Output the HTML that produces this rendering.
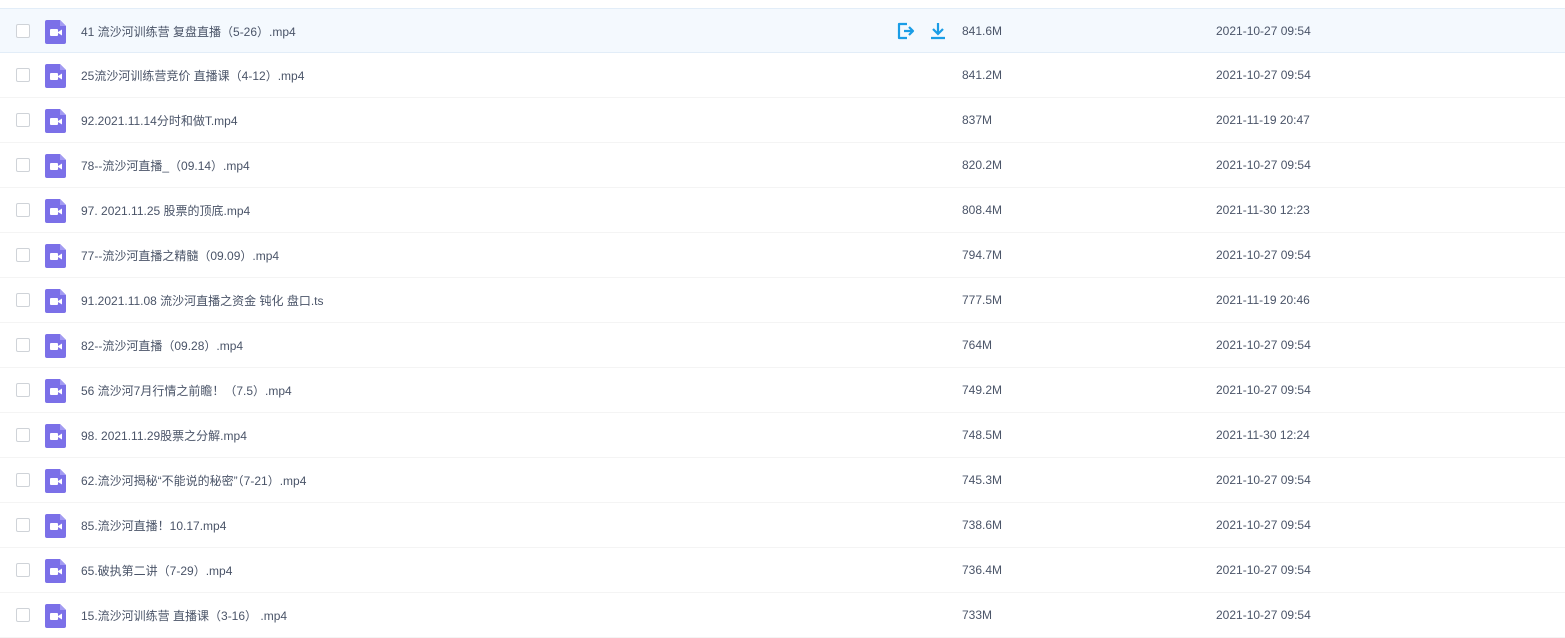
<!DOCTYPE html>
<html><head><meta charset="utf-8"><style>
body{margin:0;width:1565px;height:629px;overflow:hidden;background:#fff;font-family:"Liberation Sans","Noto Sans CJK SC",sans-serif;font-size:12px;color:#4a5468}
.r{position:absolute;left:0;width:1565px;height:44px;border-bottom:1px solid #f4f4f4}
.r.h{background:#f4f9fe;border-top:1px solid #e2edf8;border-bottom:1px solid #e2edf8;height:43px}
.cb{position:absolute;left:16px;top:15px;width:12px;height:12px;border:1px solid #cfd3d8;border-radius:2px;background:#fff}
.ic{position:absolute;left:45px;top:11px}
.n,.s,.d{position:absolute;top:14px;line-height:16px;white-space:nowrap}
.n{left:81px;top:15px}
.s{left:962px}
.d{left:1216px}
.a{position:absolute;left:896px;top:12px}
</style></head><body>
<div id="c"></div>
<script>
var rows=[["41 流沙河训练营 复盘直播（5-26）.mp4","841.6M","2021-10-27 09:54"],
["25流沙河训练营竞价 直播课（4-12）.mp4","841.2M","2021-10-27 09:54"],
["92.2021.11.14分时和做T.mp4","837M","2021-11-19 20:47"],
["78--流沙河直播_（09.14）.mp4","820.2M","2021-10-27 09:54"],
["97. 2021.11.25 股票的顶底.mp4","808.4M","2021-11-30 12:23"],
["77--流沙河直播之精髓（09.09）.mp4","794.7M","2021-10-27 09:54"],
["91.2021.11.08 流沙河直播之资金 钝化 盘口.ts","777.5M","2021-11-19 20:46"],
["82--流沙河直播（09.28）.mp4","764M","2021-10-27 09:54"],
["56 流沙河7月行情之前瞻！（7.5）.mp4","749.2M","2021-10-27 09:54"],
["98. 2021.11.29股票之分解.mp4","748.5M","2021-11-30 12:24"],
["62.流沙河揭秘“不能说的秘密”（7-21）.mp4","745.3M","2021-10-27 09:54"],
["85.流沙河直播！10.17.mp4","738.6M","2021-10-27 09:54"],
["65.破执第二讲（7-29）.mp4","736.4M","2021-10-27 09:54"],
["15.流沙河训练营 直播课（3-16） .mp4","733M","2021-10-27 09:54"]];
var ic='<svg class="ic" width="22" height="24" viewBox="0 0 22 24"><path d="M2 0H15L21 6V22Q21 24 19 24H2Q0 24 0 22V2Q0 0 2 0Z" fill="#7b70e8"/><path d="M15 0V6H21Z" fill="#a39bf2"/><rect x="5" y="9" width="8" height="7" rx="1" fill="#fff"/><path d="M13 12L17 9.5V15.5L13 13Z" fill="#fff"/></svg>';
var act='<svg class="a" width="50" height="20" viewBox="0 0 50 20"><path d="M11 3H3V17H11M8 10H17M13 6L17 10L13 14" fill="none" stroke="#1a9de6" stroke-width="2.2" stroke-linejoin="round"/><path d="M42 2V12M37 8L42 13L47 8M35 17H49" fill="none" stroke="#1a9de6" stroke-width="2.2"/></svg>';
var h='';rows.forEach(function(r,i){h+='<div class="r'+(i==0?' h':'')+'" style="top:'+(8+45*i)+'px"><div class="cb"></div>'+ic+'<div class="n">'+r[0]+'</div>'+(i==0?act:'')+'<div class="s">'+r[1]+'</div><div class="d">'+r[2]+'</div></div>'});
document.getElementById('c').innerHTML=h;
</script>
</body></html>
